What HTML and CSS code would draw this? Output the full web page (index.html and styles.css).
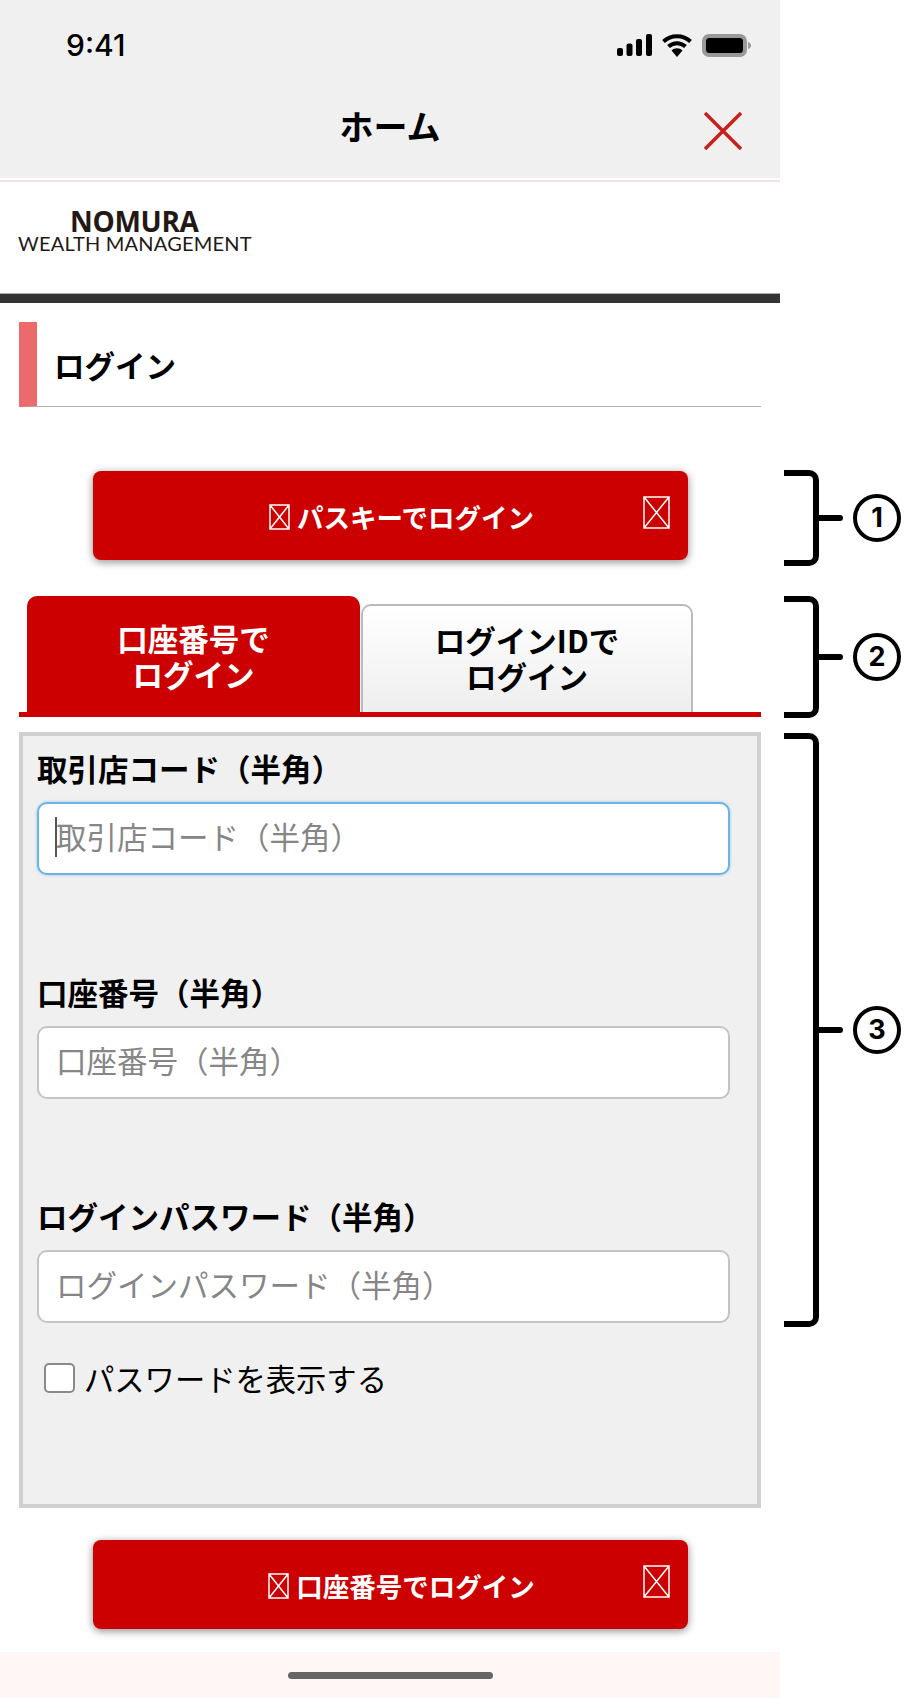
FILE: index.html
```html
<!DOCTYPE html>
<html lang="ja">
<head>
    <meta charset="UTF-8">
    <meta name="viewport" content="width=device-width, initial-scale=1.0">
    <title>ログイン</title>
    <link rel="stylesheet" href="styles.css">
</head>
<body>
    <div class="page">
        <div class="phone">
            <header class="appbar">
                <div class="status">
                    <span class="time">9:41</span>
                    <div class="status-icons">
                        <svg width="35" height="22" viewBox="0 0 35 22" fill="#000">
                            <rect x="0" y="14" width="6" height="8" rx="2"/>
                            <rect x="9.500" y="9.500" width="6" height="12.500" rx="2"/>
                            <rect x="19" y="5" width="6" height="17" rx="2"/>
                            <rect x="29" y="0" width="6" height="22" rx="2"/>
                        </svg>
                        <svg class="wifi" width="30" height="23" viewBox="0 0 30 23">
                            <path d="M1.500 7.500C9 .5 21 .5 28.500 7.500" fill="none" stroke="#000" stroke-width="4"/>
                            <path d="M6.500 12.500C11.500 8 18.500 8 23.500 12.500" fill="none" stroke="#000" stroke-width="4"/>
                            <path d="M9.500 16.500C12.500 13.500 17.500 13.500 20.500 16.500L15 23Z" fill="#000"/>
                        </svg>
                        <svg class="battery" width="49" height="23" viewBox="0 0 49 23">
                            <rect x="2" y="2" width="41" height="19" rx="5" fill="none" stroke="#999" stroke-width="4"/>
                            <rect x="4" y="4" width="37" height="15" rx="3" fill="#000"/>
                            <path d="M46 8c2 .5 3 2 3 3.500s-1 3-3 3.500z" fill="#999"/>
                        </svg>
                    </div>
                </div>
                <div class="titlebar">
                    <span></span>
                    <h1>ホーム</h1>
                    <svg class="close" width="38" height="38" viewBox="0 0 38 38">
                        <path d="M1 1L37 37M37 1L1 37" stroke="#c8201c" stroke-width="3.500"/>
                    </svg>
                </div>
            </header>
            <div class="pink-line"></div>

            <div class="brand">
                <div class="brand-name">NOMURA</div>
                <div class="brand-sub">WEALTH MANAGEMENT</div>
            </div>
            <div class="dark-bar"></div>

            <main class="content">
                <h2 class="heading">ログイン</h2>

                <button class="login-btn first-btn">
                    <svg class="tofu" width="21" height="26" viewBox="0 0 21 26"><path d="M1 1H20V25H1ZM1 1L20 25M20 1L1 25"/></svg>
                    <span>パスキーでログイン</span>
                    <svg class="tofu tofu-end" width="27" height="33" viewBox="0 0 27 33"><path d="M1 1H26V32H1ZM1 1L26 32M26 1L1 32"/></svg>
                </button>

                <div class="tabs">
                    <div class="tab active">口座番号で<br>ログイン</div>
                    <div class="tab">ログインIDで<br>ログイン</div>
                </div>

                <form class="panel">
                    <label class="field-label">取引店コード（半角）</label>
                    <div class="input focused">
                        <span class="caret"></span>
                        <span class="placeholder">取引店コード（半角）</span>
                    </div>

                    <label class="field-label">口座番号（半角）</label>
                    <div class="input">
                        <span class="placeholder">口座番号（半角）</span>
                    </div>

                    <label class="field-label">ログインパスワード（半角）</label>
                    <div class="input">
                        <span class="placeholder">ログインパスワード（半角）</span>
                    </div>

                    <div class="show-pass">
                        <span class="checkbox"></span>
                        <span>パスワードを表示する</span>
                    </div>
                </form>

                <button class="login-btn last-btn">
                    <svg class="tofu" width="21" height="26" viewBox="0 0 21 26"><path d="M1 1H20V25H1ZM1 1L20 25M20 1L1 25"/></svg>
                    <span>口座番号でログイン</span>
                    <svg class="tofu tofu-end" width="27" height="33" viewBox="0 0 27 33"><path d="M1 1H26V32H1ZM1 1L26 32M26 1L1 32"/></svg>
                </button>
            </main>

            <div class="home-area"><span class="home-bar"></span></div>
        </div>

        <!-- callouts next to the phone -->
        <div class="note note-1">
            <div class="bracket"></div>
            <span class="tick"></span>
            <span class="num">1</span>
        </div>
        <div class="note note-2">
            <div class="bracket"></div>
            <span class="tick"></span>
            <span class="num">2</span>
        </div>
        <div class="note note-3">
            <div class="bracket"></div>
            <span class="tick"></span>
            <span class="num">3</span>
        </div>
    </div>
</body>
</html>
```

FILE: styles.css
```css
* {
    box-sizing: border-box;
}

body {
    margin: 0;
    background-color: #fff;
    font-family: "Noto Sans CJK JP", "Noto Sans", sans-serif;
    color: #000;
}

.page {
    position: relative;
    width: 916px;
    height: 1698px;
    overflow: hidden;
}

.phone {
    width: 780px;
    height: 1698px;
    display: flex;
    flex-direction: column;
}

/* top bar */
.appbar {
    height: 178px;
    background-color: #f0f0f0;
}

.status {
    height: 90px;
    padding: 0 29px 0 66px;
    display: flex;
    justify-content: space-between;
    align-items: center;
}

.time {
    font-family: Inter, sans-serif;
    font-size: 30px;
    font-weight: 500;
}

.status-icons {
    display: flex;
    align-items: center;
}

.wifi {
    margin-left: 10px;
}

.battery {
    margin-left: 10px;
}

.titlebar {
    height: 74px;
    display: grid;
    grid-template-columns: 1fr auto 1fr;
    align-items: center;
}

.titlebar h1 {
    margin: -2px 0 0;
    font-size: 34px;
    font-weight: 700;
    line-height: 74px;
}

.close {
    justify-self: end;
    margin: 8px 38px 0 0;
}

.pink-line {
    height: 2px;
    margin-top: 2px;
    background-color: #f6dfdf;
}

/* logo */
.brand {
    height: 111px;
    padding: 25px 0 0 18px;
    color: #231815;
    line-height: 1;
}

.brand-name {
    margin-left: 52px;
    font-family: "Open Sans", sans-serif;
    font-size: 28px;
    font-weight: 700;
    letter-spacing: -0.3px;
}

.brand-sub {
    margin-top: -2px;
    font-family: Lato, sans-serif;
    font-size: 20px;
    letter-spacing: 0.2px;
    white-space: nowrap;
}

.dark-bar {
    height: 10px;
    background-color: #333;
    border-top: 1px solid #aaa;
}

.content {
    flex: 1;
    padding: 19px 19px 0 19px;
}

.heading {
    height: 85px;
    margin: 0;
    padding-left: 17px;
    border-left: 18px solid #ec6a6c;
    border-bottom: 1px solid #b4b4ac;
    font-size: 30.500px;
    font-weight: 700;
    line-height: 86px;
}

/* red buttons */
.login-btn {
    position: relative;
    display: flex;
    justify-content: center;
    align-items: center;
    gap: 7px;
    width: 595px;
    height: 89px;
    margin-left: 74px;
    padding: 2px 0 0 22px;
    border: none;
    border-radius: 8px;
    background-color: #cc0000;
    color: #fff;
    font-family: inherit;
    font-size: 26.500px;
    font-weight: 700;
    box-shadow: 0 2px 8px rgba(0, 0, 0, 0.45);
}

.first-btn {
    margin-top: 64px;
}

.last-btn {
    margin-top: 32px;
}

.tofu {
    flex: none;
    fill: none;
    stroke: #fff;
    stroke-width: 1.500;
}

.tofu-end {
    position: absolute;
    right: 18px;
    top: 25px;
}

/* tabs */
.tabs {
    display: flex;
    align-items: flex-end;
    gap: 1px;
    height: 157px;
    padding: 36px 0 0 8px;
    border-bottom: 5px solid #cc0000;
}

.tab {
    width: 332px;
    height: 108px;
    padding-top: 16px;
    border: 2px solid #bbb;
    border-bottom: none;
    border-radius: 10px 10px 0 0;
    background: linear-gradient(#fff, #eeeeee);
    font-size: 30.500px;
    font-weight: 700;
    line-height: 36px;
    text-align: center;
}

.tab.active {
    width: 333px;
    height: 116px;
    padding-top: 24px;
    border: none;
    background: #cc0000;
    color: #fff;
}

/* form */
.panel {
    height: 776px;
    margin-top: 15px;
    padding: 11px 27px 0 14px;
    border: 4px solid #d0d0d0;
    background-color: #f0f0f0;
}

.field-label {
    display: block;
    height: 42px;
    font-size: 30.500px;
    font-weight: 700;
    line-height: 42px;
}

.input {
    position: relative;
    height: 73px;
    margin: 13px 0 96px;
    padding-left: 17px;
    border: 2px solid #c4c4c4;
    border-radius: 10px;
    background-color: #fff;
    font-size: 30.500px;
    line-height: 64px;
    color: #868686;
}

.input.focused {
    border-color: #6cb4e8;
    box-shadow: 0 0 3px rgba(108, 180, 232, 0.7);
}

.caret {
    position: absolute;
    left: 16px;
    top: 13px;
    width: 2px;
    height: 40px;
    background-color: #555;
}

.show-pass {
    display: flex;
    align-items: center;
    gap: 9px;
    margin: -62px 0 0 7px;
    font-size: 30.300px;
    line-height: 42px;
}

.checkbox {
    width: 31px;
    height: 30px;
    border: 2px solid #8a8a8a;
    border-radius: 5px;
    background-color: #fff;
}

/* bottom */
.home-area {
    height: 46px;
    padding-top: 20px;
    background-color: #fff7f5;
    text-align: center;
}

.home-bar {
    display: block;
    width: 205px;
    height: 7px;
    margin: 0 auto;
    border-radius: 4px;
    background-color: #666;
}

/* callouts */
.note {
    position: absolute;
    left: 784px;
    width: 120px;
}

.note-1 {
    top: 470px;
    height: 96px;
}

.note-2 {
    top: 596px;
    height: 122px;
}

.note-3 {
    top: 733px;
    height: 594px;
}

.bracket {
    width: 35px;
    height: 100%;
    border: 6px solid #000;
    border-left: none;
    border-radius: 0 10px 10px 0;
}

.tick {
    position: absolute;
    left: 32px;
    top: 50%;
    width: 27px;
    height: 6px;
    margin-top: -3px;
    border-radius: 3px;
    background-color: #000;
}

.num {
    position: absolute;
    left: 69px;
    top: 50%;
    width: 48px;
    height: 48px;
    margin-top: -24px;
    border: 4px solid #000;
    border-radius: 50%;
    font-family: Inter, sans-serif;
    font-size: 27px;
    font-weight: 700;
    line-height: 40px;
    text-align: center;
}
```
